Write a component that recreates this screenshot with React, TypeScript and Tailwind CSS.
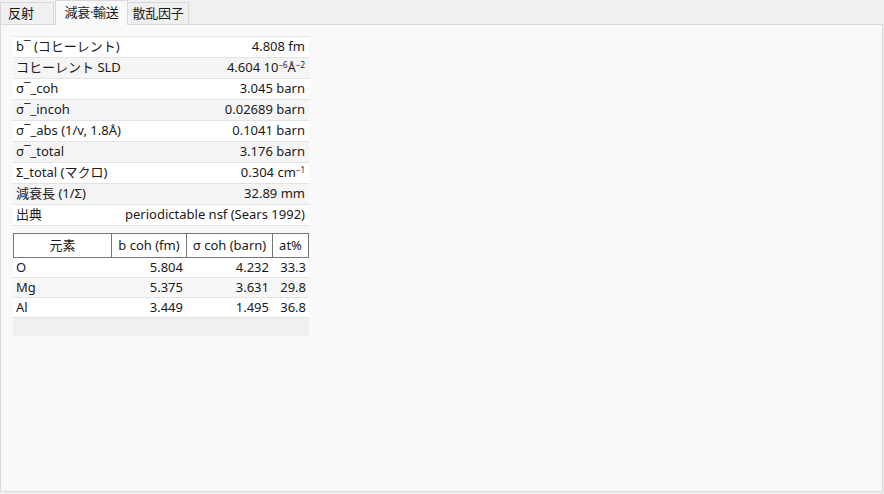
import React from 'react';

const font = { fontFamily: '"Noto Sans", "Noto Sans CJK JP", sans-serif' };

type Prop = { label: React.ReactNode; value: React.ReactNode };

const props: Prop[] = [
  { label: <>b¯ (コヒーレント)</>, value: '4.808 fm' },
  { label: 'コヒーレント SLD', value: <>4.604 10<sup className="text-[8px]">−6</sup>Å<sup className="text-[8px]">−2</sup></> },
  { label: 'σ¯_coh', value: '3.045 barn' },
  { label: 'σ¯_incoh', value: '0.02689 barn' },
  { label: 'σ¯_abs (1/v, 1.8Å)', value: '0.1041 barn' },
  { label: 'σ¯_total', value: '3.176 barn' },
  { label: 'Σ_total (マクロ)', value: <>0.304 cm<sup className="text-[8px]">−1</sup></> },
  { label: '減衰長 (1/Σ)', value: '32.89 mm' },
  { label: '出典', value: 'periodictable nsf (Sears 1992)' },
];

const elements = [
  { el: 'O', b: '5.804', s: '4.232', at: '33.3' },
  { el: 'Mg', b: '5.375', s: '3.631', at: '29.8' },
  { el: 'Al', b: '3.449', s: '1.495', at: '36.8' },
];

export default function App() {
  return (
    <div style={font} className="w-[884px] h-[494px] bg-[#f0f0f0] text-[13px] text-[#1a1a1a] flex flex-col overflow-hidden">
      {/* tab strip */}
      <div className="flex items-end h-[24px]">
        <div className="w-[54px] h-[22px] pl-[7px] flex items-center bg-[#f0f0f0] border border-b-0 border-[#d9d9d9]">反射</div>
        <div className="w-[73px] h-[25px] ml-[1px] -mb-px relative z-10 flex items-center justify-center bg-[#f9f9f9] border border-b-0 border-[#d9d9d9] tracking-[-0.3px]">
          減衰·輸送
        </div>
        <div className="w-[61px] h-[22px] flex items-center justify-center bg-[#f0f0f0] border border-b-0 border-l-0 border-[#d9d9d9] tracking-[-0.3px]">
          散乱因子
        </div>
      </div>

      <div className="flex-1 mb-[2px] mr-[1px] bg-[#f9f9f9] border border-[#d9d9d9] pt-[11px] pl-[12px]">
        <div className="w-[296px] border-t border-[#e3e3e3]">
          {props.map((p, i) => (
            <div
              key={i}
              className={`h-[21px] flex items-center justify-between px-[3px] border-b border-[#e3e3e3] ${i % 2 === 0 ? 'bg-white' : 'bg-[#f5f5f5]'}`}
            >
              <span>{p.label}</span>
              <span className="pr-[1px]">{p.value}</span>
            </div>
          ))}
        </div>

        <div className="w-[296px] mt-[7px] bg-white">
          <div className="flex h-[25px] border border-[#767676]">
            <div className="w-[98px] flex items-center justify-center border-r border-[#767676]">元素</div>
            <div className="w-[75px] flex items-center justify-center border-r border-[#767676]">b coh (fm)</div>
            <div className="w-[86px] flex items-center justify-center border-r border-[#767676]">σ coh (barn)</div>
            <div className="flex-1 flex items-center justify-center">at%</div>
          </div>
          {elements.map((e, i) => (
            <div
              key={e.el}
              className={`flex h-[20px] items-center border-b border-[#e3e3e3] ${i % 2 === 0 ? 'bg-white' : 'bg-[#f7f7f7]'}`}
            >
              <div className="w-[98px] pl-[3px]">{e.el}</div>
              <div className="w-[75px] text-right pr-[3px]">{e.b}</div>
              <div className="w-[86px] text-right pr-[3px]">{e.s}</div>
              <div className="flex-1 text-right pr-[3px]">{e.at}</div>
            </div>
          ))}
          <div className="h-[18px] bg-[#f0f0f0]" />
        </div>
      </div>
    </div>
  );
}
